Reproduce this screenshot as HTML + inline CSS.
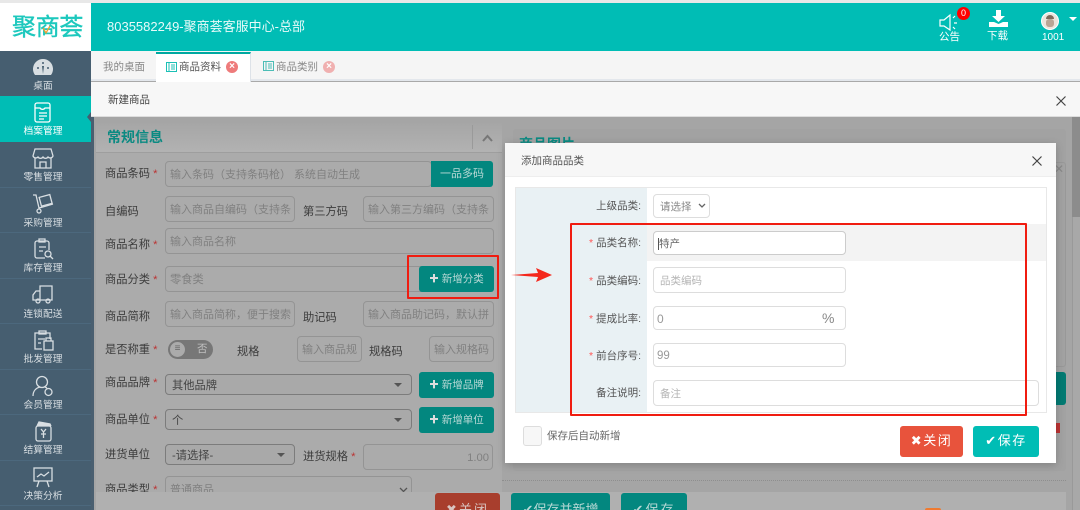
<!DOCTYPE html>
<html><head><meta charset="utf-8">
<style>
*{box-sizing:border-box}
html,body{margin:0;padding:0;width:1080px;height:510px;overflow:hidden;background:#a9a9a9;font-family:"Liberation Sans","Noto Sans CJK SC",sans-serif}
#p{position:relative;width:1080px;height:510px;overflow:hidden}
.a{position:absolute}
.t{position:absolute;white-space:nowrap;line-height:14px}
.sb{position:absolute;left:0;width:91px;height:45.5px;background:#465e70;border-bottom:1px solid #4c687d;color:#d8dee2;font-size:9.75px;text-align:center}
.sb span{position:absolute;left:0;width:86px;top:29px;line-height:13px}
.sb svg{position:absolute;left:31px;top:5px}
.lb{position:absolute;font-size:11.25px;color:#3c3c3c;white-space:nowrap;line-height:16px}
.lb i,.ml i{color:#b33;font-style:normal}
.in{position:absolute;border:1px solid #949494;border-radius:4px;background:#ababab;font-size:11px;color:#808080;padding-left:4px;height:26px;line-height:26px;white-space:nowrap;overflow:hidden}
.sel{position:absolute;border:1px solid #7c7c7c;border-radius:4px;background:#a9a9a9;font-size:11.25px;color:#444;padding-left:6px;height:21px;line-height:22px}
.sel:after{content:"";position:absolute;right:9px;top:8px;border:4px solid transparent;border-top:4px solid #555}
.gb{position:absolute;background:#03877f;border-radius:3px;color:#b9d9d6;font-size:10.5px;text-align:center;height:26px;line-height:26px;white-space:nowrap}
.gb b{color:#ddd;font-size:9.5px}
.ml{position:absolute;left:520px;width:121px;text-align:right;font-size:10.5px;color:#555;line-height:16px;white-space:nowrap}
.ml i{color:#f55;margin-right:3px}
.mi{position:absolute;left:653px;border:1px solid #ddd;border-radius:4px;background:#fff;font-size:10.5px;color:#b5b5b5;padding-left:6px;height:26px;line-height:26px}
</style></head><body><div id="p">

<!-- top -->
<div class="a" style="left:0;top:0;width:1080px;height:3px;background:#e8e8e8"></div>
<div class="a" style="left:91px;top:3px;width:989px;height:48px;background:#00bdb5"></div>
<div class="a" style="left:0;top:3px;width:91px;height:48px;background:#fff"></div>
<div class="t" style="left:12px;top:15px;font-size:24px;line-height:26px;color:#1cc8bd;letter-spacing:-.3px;-webkit-text-stroke:.4px #1cc8bd">聚商荟</div>
<svg class="a" style="left:41px;top:25px" width="12" height="10" viewBox="0 0 12 10" fill="none" stroke="#f0a030" stroke-width="1.300"><path d="M2 3l3 5 4-7"/></svg>
<div class="t" style="left:107px;top:20px;font-size:13px;color:#e8fbfa">8035582249-聚商荟客服中心-总部</div>

<!-- header icons -->
<svg class="a" style="left:939px;top:13px" width="20" height="20" viewBox="0 0 20 20" fill="none" stroke="#fff" stroke-width="1.200"><path d="M1 7h4l6-5v15l-6-4H1z"/><path d="M14 5l2-2M15 10h3M14 14l2 2"/></svg>
<div class="a" style="left:957px;top:7px;width:13px;height:13px;border-radius:50%;background:#f00;color:#fff;font-size:9px;line-height:13px;text-align:center">0</div>
<div class="t" style="left:939px;top:30px;font-size:10.5px;color:#fff">公告</div>
<svg class="a" style="left:989px;top:10px" width="19" height="17" viewBox="0 0 19 17" fill="#fff"><path d="M7 0h5v6h4l-6.500 6L3 6h4z"/><path d="M0 12h5l4.500 2L14 12h5v5H0z"/></svg>
<div class="t" style="left:987px;top:29px;font-size:10.5px;color:#fff">下载</div>
<div class="a" style="left:1041px;top:12px;width:18px;height:18px;border-radius:50%;background:#ece4dc;border:1px solid #fff"></div>
<div class="a" style="left:1046px;top:15px;width:8px;height:4px;border-radius:4px 4px 0 0;background:#7d6a5c"></div>
<div class="a" style="left:1046px;top:19px;width:8px;height:8px;border-radius:3px;background:#b9a595"></div>
<div class="t" style="left:1042px;top:31px;font-size:10px;color:#fff">1001</div>
<div class="a" style="left:1069px;top:17px;border:4px solid transparent;border-top:4px solid #fff"></div>

<!-- sidebar -->
<div class="a" style="left:0;top:51px;width:91px;height:459px;background:#465e70"></div>
<div class="sb" style="top:51px"><svg width="24" height="22" viewBox="0 0 24 22"><path d="M4 19a10 10 0 1 1 16 0z" fill="#d8dee2"/><path d="M12 18l-1-8h2z" fill="#465e70"/><circle cx="7" cy="12" r="1" fill="#465e70"/><circle cx="17" cy="12" r="1" fill="#465e70"/><circle cx="12" cy="7" r="1" fill="#465e70"/></svg><span>桌面</span></div>
<div class="sb" style="top:96px;background:#00bdb5;color:#fff;border:0"><svg width="24" height="22" viewBox="0 0 24 22" fill="none" stroke="#fff" stroke-width="1.300"><rect x="4" y="2" width="15" height="19" rx="2"/><path d="M4 7h5a3 3 0 0 0 5 0h5M8 12h8M8 15h8M8 18h5"/></svg><span>档案管理</span></div>
<div class="a" style="left:87px;top:112px;border:5px solid transparent;border-right:4px solid #455c6e;border-left:0"></div>
<div class="sb" style="top:142px"><svg width="24" height="22" viewBox="0 0 24 22" fill="none" stroke="#d8dee2" stroke-width="1.300"><path d="M4 2h16l2 7a3 3 0 0 1-5 1 3 3 0 0 1-5 0 3 3 0 0 1-5 0 3 3 0 0 1-5-1z"/><path d="M4 11v10h16V11M9 21v-6h6v6"/></svg><span>零售管理</span></div>
<div class="sb" style="top:187.500px"><svg width="24" height="22" viewBox="0 0 24 22" fill="none" stroke="#d8dee2" stroke-width="1.300"><path d="M2 2h3l3 13 14-4"/><rect x="9" y="3" width="11" height="9" transform="rotate(-15 14 7)"/><circle cx="8" cy="18" r="2"/></svg><span>采购管理</span></div>
<div class="sb" style="top:233px"><svg width="24" height="22" viewBox="0 0 24 22" fill="none" stroke="#d8dee2" stroke-width="1.300"><path d="M14 20H6a2 2 0 0 1-2-2V5a2 2 0 0 1 2-2h10a2 2 0 0 1 2 2v7"/><path d="M8 1h6v3H8zM8 9h7M8 13h4"/><circle cx="17" cy="16" r="3"/><path d="M19 18l3 3"/></svg><span>库存管理</span></div>
<div class="sb" style="top:278.500px"><svg width="24" height="22" viewBox="0 0 24 22" fill="none" stroke="#d8dee2" stroke-width="1.300"><path d="M9 2h12v14H9zM9 7H5l-3 4v5h7"/><circle cx="7" cy="17" r="2"/><circle cx="17" cy="17" r="2"/></svg><span>连锁配送</span></div>
<div class="sb" style="top:324px"><svg width="24" height="22" viewBox="0 0 24 22" fill="none" stroke="#d8dee2" stroke-width="1.300"><path d="M11 20H4V4h15v6M8 2h7v3H8zM7 10h7M7 14h3"/><rect x="13" y="12" width="9" height="9"/><path d="M15 12V9h5v3"/></svg><span>批发管理</span></div>
<div class="sb" style="top:369.500px"><svg width="24" height="22" viewBox="0 0 24 22" fill="none" stroke="#d8dee2" stroke-width="1.300"><circle cx="11" cy="7" r="5.500"/><path d="M2 21c0-5 3-8 7-9M14 12l2 1"/><circle cx="17.500" cy="17" r="3.500"/></svg><span>会员管理</span></div>
<div class="sb" style="top:415px"><svg width="24" height="22" viewBox="0 0 24 22" fill="none" stroke="#d8dee2" stroke-width="1.300"><rect x="5" y="6" width="15" height="15" rx="2"/><path d="M6 6l2-4 11 2 1 2" fill="#d8dee2"/><path d="M10 9l2.500 3L15 9M12.500 12v6M10 14h5"/></svg><span>结算管理</span></div>
<div class="sb" style="top:460.500px"><svg width="24" height="22" viewBox="0 0 24 22" fill="none" stroke="#d8dee2" stroke-width="1.300"><rect x="3" y="2" width="18" height="13"/><path d="M6 11l4-3 3 2 5-4M8 15l-2 6M16 15l2 6"/></svg><span>决策分析</span></div>

<!-- tabs -->
<div class="a" style="left:91px;top:51px;width:989px;height:30px;background:#f5f5f5;border-bottom:2px solid #e3e7ec"></div>
<div class="t" style="left:103px;top:60px;font-size:10.500px;color:#888">我的桌面</div>
<div class="a" style="left:156px;top:52px;width:95px;height:30px;background:#fff;border-top:2px solid #00a8a0;border-right:1px solid #dde2e8"></div>
<svg class="a" style="left:166px;top:62px" width="11" height="10" viewBox="0 0 11 10" fill="none" stroke="#1cc0b6" stroke-width="1"><rect x=".5" y=".5" width="10" height="9"/><path d="M3 .5v9M5 3h4M5 5h4M5 7h4"/></svg>
<div class="t" style="left:179px;top:60px;font-size:10.500px;color:#555">商品资料</div>
<div class="a" style="left:226px;top:61px;width:12px;height:12px;border-radius:50%;background:#ee7b7b;color:#fff;font-size:10px;line-height:12px;text-align:center;font-weight:bold">×</div>
<svg class="a" style="left:263px;top:61px" width="11" height="10" viewBox="0 0 11 10" fill="none" stroke="#4cbdb6" stroke-width="1"><rect x=".5" y=".5" width="10" height="9"/><path d="M3 .5v9M5 3h4M5 5h4M5 7h4"/></svg>
<div class="t" style="left:276px;top:60px;font-size:10.500px;color:#888">商品类别</div>
<div class="a" style="left:323px;top:61px;width:12px;height:12px;border-radius:50%;background:#f0b0b0;color:#fff;font-size:10px;line-height:12px;text-align:center;font-weight:bold">×</div>

<div class="a" style="left:91px;top:82px;width:989px;height:35px;background:#f7f7f7;border-bottom:1px solid #ddd"></div>
<div class="t" style="left:108px;top:93px;font-size:10.500px;color:#444">新建商品</div>
<svg class="a" style="left:1056px;top:96px" width="10" height="10" viewBox="0 0 10 10" stroke="#444" stroke-width="1.200"><path d="M.5.5l9 9M9.500.5l-9 9"/></svg>

<!-- left panel -->
<div class="a" style="left:91px;top:117px;width:989px;height:393px;background:#a5a5a5"></div>
<div class="a" style="left:91px;top:117px;width:3px;height:393px;background:#4a5f70"></div>
<div class="a" style="left:96px;top:123px;width:406px;height:387px;background:#ababab;border-radius:3px"></div>
<div class="a" style="left:96px;top:123px;width:406px;height:30px;background:linear-gradient(#a6a6a6,#b2b2b2);border-bottom:1px solid #9e9e9e"></div>
<div class="t" style="left:107px;top:129px;font-size:14px;line-height:16px;font-weight:bold;color:#0b8a82">常规信息</div>
<div class="a" style="left:472px;top:125px;width:1px;height:24px;background:#9a9a9a"></div>
<svg class="a" style="left:482px;top:134px" width="11" height="8" viewBox="0 0 11 8" fill="none" stroke="#777" stroke-width="2"><path d="M1 7l4.500-5L10 7"/></svg>

<div class="lb" style="left:105px;top:166px">商品条码 <i>*</i></div>
<div class="in" style="left:165px;top:161px;width:267px">输入条码（支持条码枪） 系统自动生成</div>
<div class="gb" style="left:431px;top:161px;width:62px;border-radius:0 3px 3px 0;font-size:11px">一品多码</div>

<div class="lb" style="left:105px;top:204px">自编码</div>
<div class="in" style="left:165px;top:196px;width:130px">输入商品自编码（支持条</div>
<div class="lb" style="left:303px;top:204px">第三方码</div>
<div class="in" style="left:363px;top:196px;width:131px">输入第三方编码（支持条</div>

<div class="lb" style="left:105px;top:237px">商品名称 <i>*</i></div>
<div class="in" style="left:165px;top:228px;width:329px">输入商品名称</div>

<div class="lb" style="left:105px;top:272px">商品分类 <i>*</i></div>
<div class="in" style="left:165px;top:266px;width:260px;font-size:11.250px">零食类</div>
<div class="gb" style="left:419px;top:266px;width:75px"><b>✚</b> 新增分类</div>
<div class="a" style="left:407px;top:255px;width:92px;height:44px;border:2px solid #f01c10;border-radius:1px"></div>

<div class="lb" style="left:105px;top:309px">商品简称</div>
<div class="in" style="left:165px;top:301px;width:130px">输入商品简称，便于搜索</div>
<div class="lb" style="left:303px;top:310px">助记码</div>
<div class="in" style="left:363px;top:301px;width:131px">输入商品助记码，默认拼</div>

<div class="lb" style="left:105px;top:342px">是否称重 <i>*</i></div>
<div class="a" style="left:168px;top:340px;width:45px;height:19px;border-radius:10px;background:#777"></div>
<div class="a" style="left:170px;top:342px;width:15px;height:15px;border-radius:50%;background:#ababab;color:#666;font-size:10px;line-height:14px;text-align:center">≡</div>
<div class="t" style="left:197px;top:342px;font-size:10.500px;color:#c0c0c0">否</div>
<div class="lb" style="left:237px;top:344px">规格</div>
<div class="in" style="left:297px;top:336px;width:65px">输入商品规</div>
<div class="lb" style="left:369px;top:344px">规格码</div>
<div class="in" style="left:429px;top:336px;width:65px">输入规格码</div>

<div class="lb" style="left:105px;top:375px">商品品牌 <i>*</i></div>
<div class="sel" style="left:165px;top:374px;width:247px">其他品牌</div>
<div class="gb" style="left:419px;top:372px;width:75px"><b>✚</b> 新增品牌</div>

<div class="lb" style="left:105px;top:412px">商品单位 <i>*</i></div>
<div class="sel" style="left:165px;top:409px;width:247px">个</div>
<div class="gb" style="left:419px;top:407px;width:75px"><b>✚</b> 新增单位</div>

<div class="lb" style="left:105px;top:447px">进货单位</div>
<div class="sel" style="left:165px;top:444px;width:130px">-请选择-</div>
<div class="lb" style="left:303px;top:449px">进货规格 <i>*</i></div>
<div class="in" style="left:363px;top:444px;width:130px;text-align:right;padding-right:3px;font-size:11.250px">1.00</div>

<div class="lb" style="left:105px;top:482px">商品类型 <i>*</i></div>
<div class="in" style="left:165px;top:476px;width:247px">普通商品</div>
<svg class="a" style="left:399px;top:487px" width="9" height="6" viewBox="0 0 9 6" fill="none" stroke="#555" stroke-width="1.300"><path d="M1 1l3.500 3.500L8 1"/></svg>

<!-- right panel behind -->
<div class="a" style="left:513px;top:129px;width:553px;height:342px;background:#a2a2a2;border-radius:3px"></div>
<div class="t" style="left:519px;top:136px;font-size:14px;line-height:16px;font-weight:bold;color:#0b8a82">商品图片</div>
<div class="a" style="left:1000px;top:162px;width:66px;height:205px;border:1px solid #989898;border-radius:3px"></div>
<div class="t" style="left:1054px;top:162px;font-size:12px;color:#888">✕</div>
<div class="a" style="left:1040px;top:372px;width:26px;height:33px;background:#037a72;border-radius:3px"></div>
<div class="a" style="left:1056px;top:423px;width:4px;height:10px;background:#b33"></div>
<div class="a" style="left:502px;top:480px;width:564px;border-top:1px dotted #8e8e8e"></div>
<div class="a" style="left:1072px;top:117px;width:8px;height:393px;background:#a8a8a8;border-left:1px solid #999"></div>
<div class="a" style="left:1072px;top:117px;width:8px;height:100px;background:#8c8c8c"></div>

<!-- bottom bar -->
<div class="a" style="left:96px;top:492px;width:970px;height:18px;background:#b0b0b0"></div>
<div class="a" style="left:435px;top:493px;width:65px;height:40px;background:#a83e2d;border-radius:3px;color:#d9c4c0;font-size:13px;line-height:34px;text-align:center;letter-spacing:2px">✖关闭</div>
<div class="a" style="left:511px;top:493px;width:99px;height:40px;background:#03877f;border-radius:3px;color:#b9d9d6;font-size:13px;line-height:34px;text-align:center">✔保存并新增</div>
<div class="a" style="left:621px;top:493px;width:66px;height:40px;background:#03877f;border-radius:3px;color:#b9d9d6;font-size:13px;line-height:34px;text-align:center;letter-spacing:2px">✔保存</div>
<div class="a" style="left:925px;top:508px;width:16px;height:2px;background:#ef7a30;border-radius:3px 3px 0 0"></div>

<!-- modal -->
<div class="a" style="left:505px;top:143px;width:551px;height:320px;background:#fff;box-shadow:0 2px 8px rgba(0,0,0,.2)"></div>
<div class="a" style="left:505px;top:143px;width:551px;height:34px;background:#f7f7f7;border-bottom:1px solid #eee"></div>
<div class="t" style="left:521px;top:154px;font-size:10.500px;color:#555">添加商品品类</div>
<svg class="a" style="left:1032px;top:156px" width="10" height="10" viewBox="0 0 10 10" stroke="#444" stroke-width="1.200"><path d="M.5.5l9 9M9.500.5l-9 9"/></svg>

<div class="a" style="left:515px;top:187px;width:532px;height:226px;border:1px solid #e8e8e8"></div>
<div class="a" style="left:516px;top:188px;width:131px;height:224px;background:#e9f1f4"></div>
<div class="a" style="left:647px;top:224px;width:399px;height:37px;background:#f3f3f3"></div>

<div class="ml" style="top:198px">上级品类:</div>
<div class="mi" style="top:194px;width:57px;height:24px;line-height:24px;color:#888">请选择</div>
<svg class="a" style="left:698px;top:203px" width="8" height="6" viewBox="0 0 8 6" fill="none" stroke="#666" stroke-width="1.300"><path d="M1 1l3 3 3-3"/></svg>

<div class="ml" style="top:235px"><i>*</i>品类名称:</div>
<div class="mi" style="top:231px;width:193px;height:24px;line-height:24px;border-color:#ccc;color:#666;padding-left:4px"><span style="border-left:1px solid #555">特产</span></div>

<div class="ml" style="top:273px"><i>*</i>品类编码:</div>
<div class="mi" style="top:267px;width:193px">品类编码</div>

<div class="ml" style="top:311px"><i>*</i>提成比率:</div>
<div class="mi" style="top:306px;width:193px;height:24px;line-height:24px;color:#999;padding-left:3px;font-size:12px">0<span style="position:absolute;left:168px;top:-1px;font-size:14px;color:#888">%</span></div>

<div class="ml" style="top:348px"><i>*</i>前台序号:</div>
<div class="mi" style="top:343px;width:193px;height:24px;line-height:24px;color:#999;padding-left:3px;font-size:11.500px">99</div>

<div class="ml" style="top:385px">备注说明:</div>
<div class="mi" style="top:380px;width:386px">备注</div>

<div class="a" style="left:523px;top:426px;width:19px;height:20px;background:#f7f7f7;border:1px solid #ddd;border-radius:3px"></div>
<div class="t" style="left:547px;top:429px;font-size:10.500px;color:#666">保存后自动新增</div>
<div class="a" style="left:900px;top:426px;width:63px;height:31px;background:#e8533c;border-radius:3px;color:#fff;font-size:13px;line-height:30px;text-align:center;letter-spacing:1.500px">✖关闭</div>
<div class="a" style="left:973px;top:426px;width:66px;height:31px;background:#00bdb5;border-radius:3px;color:#fff;font-size:13px;line-height:30px;text-align:center;letter-spacing:1.500px">✔保存</div>

<!-- annotation -->
<div class="a" style="left:570px;top:223px;width:457px;height:193px;border:2px solid #f01c10;border-radius:1px"></div>
<svg class="a" style="left:510px;top:267px" width="44" height="16" viewBox="0 0 44 16"><path d="M1 8l27-2-2-5 16 7-16 7 2-5z" fill="#f4281c"/></svg>
</div></body></html>
